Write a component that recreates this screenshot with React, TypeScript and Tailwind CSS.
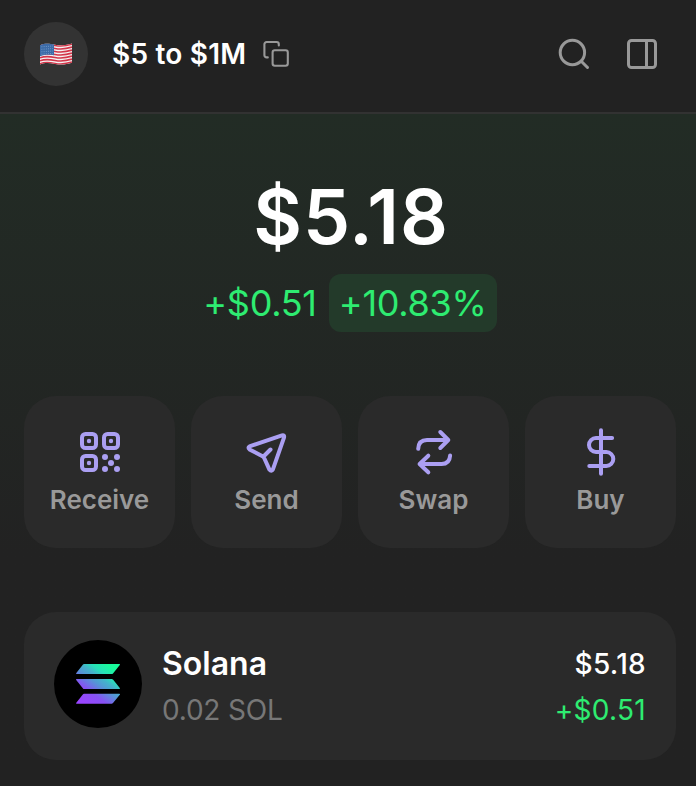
import type { ReactNode } from "react";

function FlagIcon() {
  const stripes = [0, 1, 2, 3, 4, 5, 6];
  return (
    <svg width="32" height="22" viewBox="0 0 32 22" fill="none">
      <defs>
        <clipPath id="flag">
          <path d="M0 2.2C5 .2 9 .7 15 1.7C21 2.8 26 2.4 32 .5V19.8C26 21.8 21 22 15 21C9 19.8 5 19.7 0 21.5Z" />
        </clipPath>
      </defs>
      <g clipPath="url(#flag)">
        <path fill="#f5f1f2" d="M0 0H32V22H0Z" />
        {stripes.map((i) => (
          <path
            key={i}
            d="M0 2.8C5 .8 9 1.3 15 2.4C21 3.5 26 3 32 1.1"
            stroke="#d3364a"
            strokeWidth="1.55"
            transform={`translate(0 ${i * 3})`}
          />
        ))}
        <path fill="#3c6ba8" d="M0 0H14V12.2C9 11.4 5 11.6 0 13.2Z" />
        <path
          d="M1.5 3.8L13 3M1.5 6.3L13 5.5M1.5 8.8L13 8M1.5 11.2L13 10.4"
          stroke="#8fb2d6"
          strokeWidth="0.8"
          strokeDasharray="0.8 1.4"
        />
      </g>
    </svg>
  );
}

function CopyIcon() {
  return (
    <svg width="28" height="28" viewBox="0 0 28 28" fill="none" stroke="#999" strokeWidth="2.1" strokeLinecap="round">
      <rect x="10.6" y="10.2" width="15.2" height="15.6" rx="2.2" />
      <path d="M5.8 17.4H4.6a2.2 2.2 0 0 1-2.2-2.2V4.2A2.2 2.2 0 0 1 4.6 2H14.6A2.2 2.2 0 0 1 16.8 4.2V5.4" />
    </svg>
  );
}

function SearchIcon() {
  return (
    <svg width="36" height="36" viewBox="0 0 36 36" fill="none" stroke="#999" strokeWidth="3" strokeLinecap="round">
      <circle cx="16.4" cy="16.5" r="12.2" />
      <path d="M25.5 25.5L31.5 31.5" />
    </svg>
  );
}

function PanelIcon() {
  return (
    <svg width="36" height="36" viewBox="0 0 36 36" fill="none" stroke="#999" strokeWidth="3">
      <rect x="4.5" y="4.5" width="27" height="27" rx="3" />
      <path d="M22.5 4.5V31.5" />
    </svg>
  );
}

function ActionIcon({ children }: { children: ReactNode }) {
  return (
    <svg
      width="48"
      height="48"
      viewBox="0 0 48 48"
      fill="none"
      stroke="#ab9ff2"
      strokeWidth="4"
      strokeLinecap="round"
      strokeLinejoin="round"
    >
      {children}
    </svg>
  );
}

function SolanaLogo() {
  return (
    <svg width="44" height="40" viewBox="0 0 44 40">
      <defs>
        <linearGradient id="sol" x1="6" y1="42" x2="38" y2="-2" gradientUnits="userSpaceOnUse">
          <stop offset="0.08" stopColor="#9945ff" />
          <stop offset="0.3" stopColor="#8752f3" />
          <stop offset="0.5" stopColor="#5497d5" />
          <stop offset="0.62" stopColor="#43b4ca" />
          <stop offset="0.72" stopColor="#28e0b9" />
          <stop offset="0.9" stopColor="#19fb9b" />
        </linearGradient>
      </defs>
      <g fill="url(#sol)">
        <path d="M8 0H43.4Q44.4 .3 43.8 1L37 9.4Q36.4 10 35.6 10H.6Q-.3 9.7.3 9L7 .6Q7.4 0 8 0Z" />
        <path d="M.6 15H35.6Q36.4 15 37 15.6L43.8 24Q44.3 24.8 43.4 25H8Q7.4 25 7 24.4L.2 16Q-.3 15.2.6 15Z" />
        <path d="M8 29.7H43.4Q44.4 30 43.8 30.7L37 39.1Q36.4 39.7 35.6 39.7H.6Q-.3 39.4.3 38.7L7 30.3Q7.4 29.7 8 29.7Z" />
      </g>
    </svg>
  );
}

const actions = [
  {
    label: "Receive",
    icon: (
      <>
        <rect x="6" y="6" width="14" height="14" rx="3.5" />
        <rect x="28" y="6" width="14" height="14" rx="3.5" />
        <rect x="6" y="28" width="14" height="14" rx="3.5" />
        <g fill="#ab9ff2" stroke="none">
          <circle cx="13" cy="13" r="2.2" />
          <circle cx="35" cy="13" r="2.2" />
          <circle cx="13" cy="35" r="2.2" />
          <circle cx="29" cy="29" r="3" />
          <circle cx="41" cy="29" r="3" />
          <circle cx="35" cy="35" r="3" />
          <circle cx="29" cy="41" r="3" />
          <circle cx="41" cy="41" r="3" />
        </g>
      </>
    ),
  },
  {
    label: "Send",
    icon: (
      <path d="M20.5 28.5L27.5 21.5M6.5 18.4L39 7.4Q41.7 6.8 41 9.6L30 41.2Q28.5 44 26.3 41.4L21.3 30.2Q20.8 29 19.5 28.3L6.5 21.4Q4.5 19.5 6.5 18.4Z" />
    ),
  },
  {
    label: "Swap",
    icon: (
      <path d="M8.2 20.8Q8.6 12 17 12H38M30.3 4L38.3 12L30.3 20M40.1 27.6Q39.6 36 31.6 36H10.1M18.3 27.7L9.6 36L18.3 44.3" />
    ),
  },
  {
    label: "Buy",
    icon: <path d="M24 2.2V45.8M35.1 10H19A7 7 0 0 0 19 24H29.3A7 7 0 0 1 29.3 38H12.3" />,
  },
];

export default function App() {
  return (
    <div className="h-[786px] w-[696px] overflow-hidden bg-[#222222] font-['Inter',sans-serif] text-white">
      <header className="flex h-[114px] items-center border-b-2 border-[#323232] pr-9 pb-1 pl-6">
        <div className="flex size-16 items-center justify-center rounded-full bg-[#333333]">
          <FlagIcon />
        </div>
        <span className="ml-6 w-[138px] text-[28px] leading-9 font-semibold tracking-[0.2px] whitespace-nowrap">
          $5 to $1M
        </span>
        <div className="ml-3">
          <CopyIcon />
        </div>
        <div className="ml-auto flex gap-8">
          <SearchIcon />
          <PanelIcon />
        </div>
      </header>

      <main className="bg-linear-to-b from-[#222c25] to-[#222222] to-[440px] pr-5 pl-6">
        <section className="flex h-[282px] flex-col items-center pt-[59px]">
          <div className="pl-0.5 text-[75px] leading-[88px] font-semibold tracking-[0.9px]">$5.18</div>
          <div className="mt-[13px] flex items-center gap-3 text-4xl tracking-[-0.3px] text-[#2eec71]">
            <span>+$0.51</span>
            <span className="flex h-[58px] w-[168px] items-center justify-center rounded-xl bg-[#233a2a]">+10.83%</span>
          </div>
        </section>

        <section className="grid grid-cols-4 gap-4">
          {actions.map((a) => (
            <button key={a.label} className="flex h-38 flex-col items-center rounded-[32px] bg-[#2a2a2a] pt-8">
              <ActionIcon>{a.icon}</ActionIcon>
              <span className="mt-2 text-[26px] leading-8 font-semibold text-[#999999]">{a.label}</span>
            </button>
          ))}
        </section>

        <section className="mt-16 flex h-[148px] items-center rounded-[32px] bg-[#2a2a2a] px-[30px]">
          <div className="mb-1 flex size-22 items-center justify-center rounded-full bg-black">
            <SolanaLogo />
          </div>
          <div className="ml-5 flex flex-1 flex-col gap-2">
            <span className="text-[32px] leading-10 font-semibold">Solana</span>
            <span className="text-[28px] leading-9 tracking-[-0.2px] text-[#777777]">0.02 SOL</span>
          </div>
          <div className="flex flex-col items-end gap-2 text-[28px] tracking-[0.3px]">
            <span className="leading-10 font-medium">$5.18</span>
            <span className="leading-9 text-[#2eec71]">+$0.51</span>
          </div>
        </section>
      </main>
    </div>
  );
}
